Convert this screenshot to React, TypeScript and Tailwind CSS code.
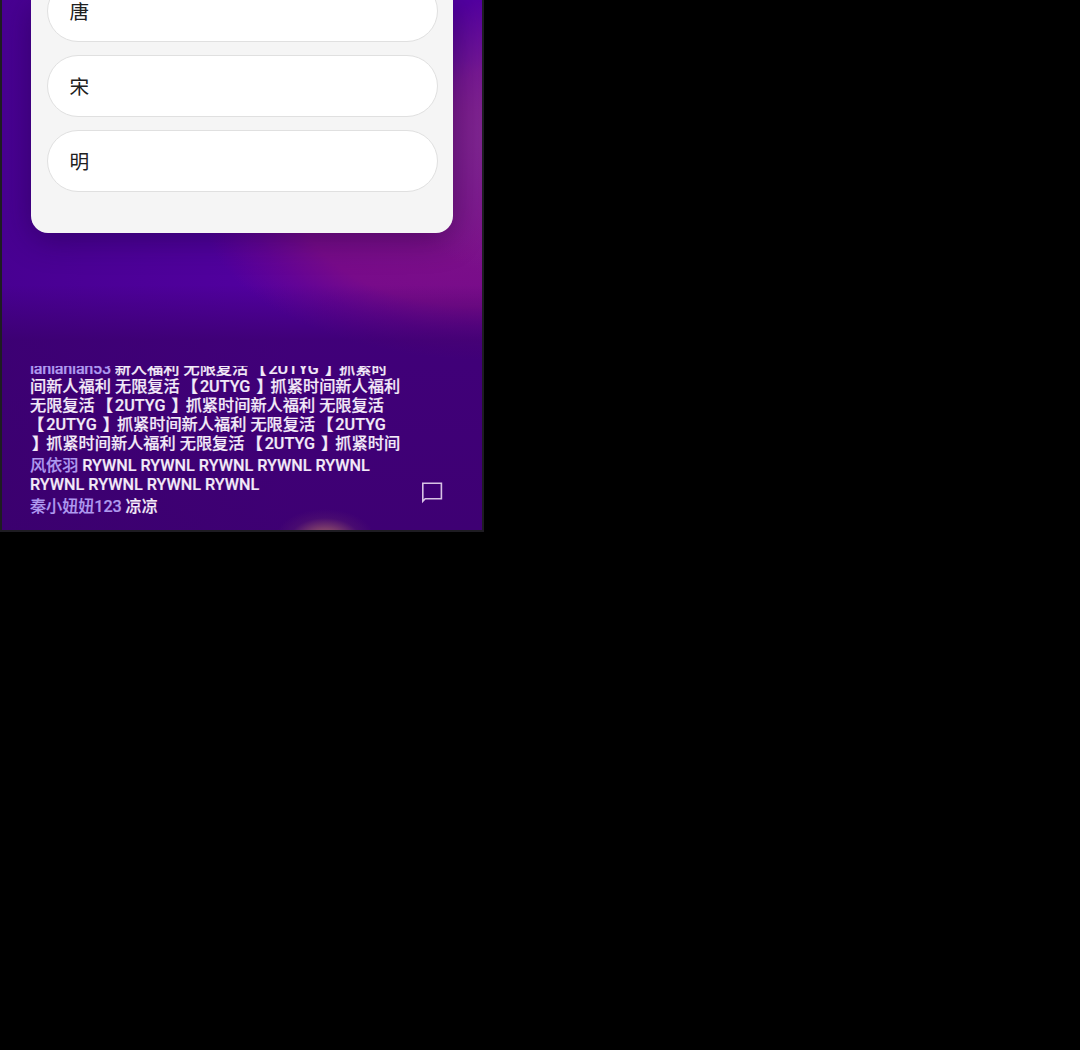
import React from "react";

const answers = ["唐", "宋", "明"];

type Message = { user?: string; tight?: boolean; lines: string[] };

const messages: Message[] = [
  {
    user: "lanlanlan53",
    tight: true,
    lines: [
      "新人福利 无限复活 【2UTYG 】抓紧时",
      "间新人福利 无限复活 【2UTYG 】抓紧时间新人福利",
      "无限复活 【2UTYG 】抓紧时间新人福利 无限复活",
      "【2UTYG 】抓紧时间新人福利 无限复活 【2UTYG",
      "】抓紧时间新人福利 无限复活 【2UTYG 】抓紧时间",
    ],
  },
  {
    user: "风依羽",
    lines: ["RYWNL RYWNL RYWNL RYWNL RYWNL", "RYWNL RYWNL RYWNL RYWNL"],
  },
  { user: "秦小妞妞123", lines: ["凉凉"] },
];

function Answer({ label }: { label: string }) {
  return (
    <div className="flex h-[62px] shrink-0 items-center rounded-full border border-[#e0e0e0] bg-white pt-[3px] pl-[21.5px] text-[19.7px] leading-none text-[#202020]">
      {label}
    </div>
  );
}

function ChatMessage({ user, tight, lines }: Message) {
  return (
    <div className="mt-[3.5px] whitespace-pre">
      {lines.map((line, i) => (
        <div key={i} className="h-[18.8px] leading-[18.8px]">
          {i === 0 && (
            <span className={tight ? "tracking-[-0.28px] text-[#af9aef]" : "tracking-[-0.1px] text-[#af9aef]"}>
              {user}{" "}
            </span>
          )}
          {line.split(/([【】])/).map((part, k) =>
            part === "【" ? (
              <span key={k} className="-ml-[2px] mr-[2px] font-black">{part}</span>
            ) : part === "】" ? (
              <span key={k} className="-mr-[2px] ml-[2px] font-black">{part}</span>
            ) : (
              part
            ),
          )}
        </div>
      ))}
    </div>
  );
}

export default function App() {
  return (
    <main className="h-[1050px] w-[1080px] overflow-hidden bg-black font-['Roboto','Noto_Sans_CJK_SC',sans-serif]">
      <div className="h-[532px] w-[484px] border-2 border-t-0 border-[#1e1c22]">
        <div className="flex h-[530px] flex-col overflow-hidden bg-[radial-gradient(ellipse_50px_30px_at_323px_539px,#a8666a_0%,#8a4a68cc_35%,#5c206a55_70%,transparent_100%),linear-gradient(180deg,transparent_285px,#3500609c_340px,#35005fb0_100%),radial-gradient(ellipse_110px_140px_at_500px_135px,#7f2a90_0%,#7d1e8fcc_50%,transparent_100%),radial-gradient(ellipse_290px_150px_at_490px_210px,#7d1289_0%,#780b8a_65%,#6d0690aa_82%,transparent_100%),linear-gradient(90deg,#480092,#5200a0_60%,#5200a0)]">
          <section className="ml-[29px] flex h-[232.5px] w-[422px] shrink-0 flex-col justify-end gap-[13px] rounded-b-[17px] bg-[#f5f5f5] pr-[15px] pb-[40.5px] pl-4 shadow-[0_6px_32px_rgba(20,0,45,0.4)]">
            {answers.map((a) => (
              <Answer key={a} label={a} />
            ))}
          </section>
          <section className="mt-[133.5px] flex h-[164px] shrink-0 items-end pl-7">
            <div className="flex h-[164px] w-[391px] flex-col justify-end overflow-hidden pb-[13px] text-[16.2px] font-medium text-[#f3eaf8] [-webkit-text-stroke:0.2px_currentColor]">
              {messages.map((m, i) => (
                <ChatMessage key={i} {...m} />
              ))}
            </div>
            <svg className="mb-[26px] h-[23px] w-[22px] shrink-0" viewBox="0 0 22 23" fill="none" stroke="#d8c3e5" strokeWidth="1.6">
              <path d="M1.8 2.2h18.6v15.6H4.2L1.8 20.2Z" />
            </svg>
          </section>
        </div>
      </div>
    </main>
  );
}
